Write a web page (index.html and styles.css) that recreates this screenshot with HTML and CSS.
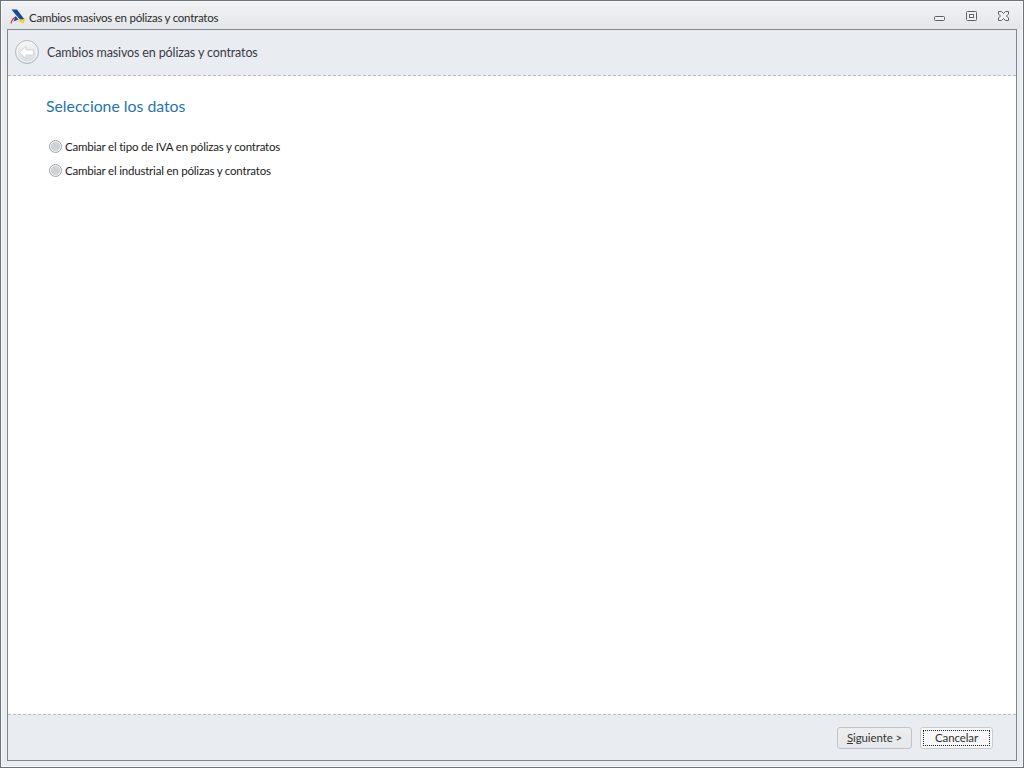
FILE: index.html
```html
<!DOCTYPE html>
<html lang="es">
<head>
<meta charset="utf-8">
<title>Cambios masivos en pólizas y contratos</title>
<link rel="stylesheet" href="styles.css">
</head>
<body>
<div class="window">
  <div class="titlebar">
    <svg class="logo" width="16" height="16" viewBox="0 0 16 16">
      <path d="M1.500 0.500h5.500L14.500 10.500H10L5.500 5.500z" fill="#1a4a94"/>
      <path d="M5.500 7L8.500 10.500 3.500 12.500z" fill="#1a4a94"/>
      <path d="M5 13L15.500 9.500 13.500 14.500 9.500 12.500z" fill="#f2d21a"/>
      <path d="M1 14.500C1.500 11.500 3 9.500 5 8.500" fill="none" stroke="#d8262c" stroke-width="1.100"/>
    </svg>
    <span class="title">Cambios masivos en pólizas y contratos</span>
    <div class="controls">
      <svg class="ctl" width="12" height="12" viewBox="0 0 12 12"><rect x="0.500" y="6.500" width="10" height="4" rx="1" fill="#eef0f2" stroke="#5a6066"/></svg>
      <svg class="ctl" width="12" height="12" viewBox="0 0 12 12"><rect x="0.500" y="1.500" width="10" height="9" rx="1" fill="#eef0f2" stroke="#5a6066"/><rect x="3.500" y="4.500" width="4" height="3" fill="#fff" stroke="#5a6066"/></svg>
      <svg class="ctl" width="12" height="12" viewBox="0 0 12 12"><path d="M0.500 1.500h3L5.500 3.500 7.500 1.500h3V4L8.500 6l2 2v2.500h-3L5.500 8.500l-2 2h-3V8l2-2-2-2z" fill="#eef0f2" stroke="#5a6066"/></svg>
    </div>
  </div>
  <div class="frame">
    <header class="head">
      <svg class="back" width="26" height="26" viewBox="0 0 26 26">
        <defs><linearGradient id="bk" x1="0" y1="0" x2="0" y2="1"><stop offset="0" stop-color="#f6f7f8"/><stop offset="1" stop-color="#d5d9df"/></linearGradient></defs>
        <circle cx="13" cy="13" r="11.500" fill="url(#bk)" stroke="#b4bac1"/>
        <circle cx="13" cy="13" r="10" fill="none" stroke="#f4f5f7"/>
        <path d="M5.500 13.500L12 7.500v3.500h7.500v5H12v3.500z" fill="#fff" stroke="#c4c9cf" stroke-width="0.700" stroke-linejoin="round"/>
      </svg>
      <span class="head-text">Cambios masivos en pólizas y contratos</span>
    </header>
    <main class="content">
      <h1 class="heading">Seleccione los datos</h1>
      <label class="option"><span class="radio"></span>Cambiar el tipo de IVA en pólizas y contratos</label>
      <label class="option"><span class="radio"></span>Cambiar el industrial en pólizas y contratos</label>
    </main>
    <footer class="foot">
      <button class="btn"><span><u>S</u>iguiente &gt;</span></button>
      <button class="btn btn-default"><span class="focus">Cancelar</span></button>
    </footer>
  </div>
</div>
</body>
</html>
```
FILE: styles.css
```css
html, body { margin: 0; height: 100%; }
body { font-family: Lato, "Open Sans", sans-serif; font-size: 12px; color: #222; overflow: hidden; }
.window { box-sizing: border-box; width: 1024px; height: 768px; display: flex; flex-direction: column; background: #e9ecf0; border: 1px solid #6d7378; box-shadow: inset 0 0 0 1px #f7f8f9; padding: 0 6px 6px; }
.titlebar { box-sizing: border-box; height: 27px; flex: none; display: flex; align-items: center; background: linear-gradient(#f0f1f3, #e4e7ea); margin: 1px -5px 0; padding: 0 5px; }
.logo { margin-left: 3px; margin-top: 3px; }
.title { margin-left: 3px; color: #2b2b2b; font-size: 11.500px; letter-spacing: -0.240px; margin-top: 4px; }
.controls { margin-left: auto; display: flex; gap: 20px; margin-right: 7px; margin-top: 1px; }
.ctl { display: block; }
.frame { flex: 1; display: flex; flex-direction: column; border: 1px solid #82878c; min-height: 0; }
.head { box-sizing: border-box; height: 46px; flex: none; display: flex; align-items: center; border-bottom: 1px dashed #b9bdc2; padding: 0 0 1px 6px; background: #e9ecf0; }
.head-text { margin-left: 7px; color: #3a3a46; font-size: 12.500px; letter-spacing: -0.130px; }
.back { display: block; }
.content { flex: 1; background: #fff; padding: 20px 38px 0; }
.heading { margin: 0 0 18px; font-weight: 400; font-size: 15.800px; line-height: 20px; color: #1f74b5; }
.option { display: flex; align-items: center; height: 24px; margin-left: 3px; font-size: 11.500px; letter-spacing: -0.200px; color: #1c1c1c; }
.radio { box-sizing: border-box; width: 13px; height: 13px; border-radius: 50%; border: 1px solid #9ea3a8; background: radial-gradient(circle at 50% 50%, #cdcfd1 0, #d2d4d6 52%, #f4f5f6 66%, #eaebec 100%); margin-right: 3px; }
.foot { box-sizing: border-box; height: 46px; flex: none; display: flex; justify-content: flex-end; align-items: center; gap: 8px; border-top: 1px dashed #b9bdc2; padding: 0 23px 0 0; background: #e9ecf0; }
.btn { box-sizing: border-box; width: 75px; height: 22px; padding: 0; border: 1px solid #c0c4c9; border-radius: 3px; background: linear-gradient(#eceef1, #e5e8ec); font: inherit; font-size: 11.500px; letter-spacing: -0.100px; color: #333; display: flex; align-items: center; justify-content: center; }
.btn-default { width: 73px; background: #f6f7f8; border-color: #c8ccd0; padding: 2px; }
.focus { flex: 1; align-self: stretch; border: 1px dotted #222; display: flex; align-items: center; justify-content: center; }
```
